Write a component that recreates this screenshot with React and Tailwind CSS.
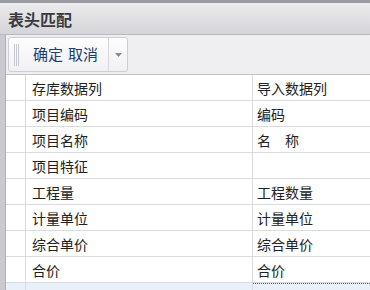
import React from "react";

const rows = [
  ["项目编码", "编码"],
  ["项目名称", "名　称"],
  ["项目特征", ""],
  ["工程量", "工程数量"],
  ["计量单位", "计量单位"],
  ["综合单价", "综合单价"],
  ["合价", "合价"],
];

const font = { fontFamily: '"Noto Sans CJK SC", "Noto Sans", sans-serif' };

const Row = ({ a, b }) => (
  <div className="flex h-[26px] border-b border-[#d9dae2]">
    <div className="w-[20px] shrink-0 border-r border-[#d9dae2]" />
    <div className="w-[227px] shrink-0 border-r border-[#d9dae2] pl-[6px] leading-[26px]">
      {a}
    </div>
    <div className="flex-1 pl-[4px] leading-[26px]">{b}</div>
  </div>
);

const App = () => {
  return (
    <div
      className="w-[370px] h-[290px] overflow-hidden bg-[#efeff1] text-[14px] text-[#222]"
      style={font}
    >
      <div className="h-[3px] bg-[#9b9ba3]" />
      <div className="h-[32px] flex items-center pl-[8px] border-b border-[#b9b9c1] bg-gradient-to-b from-[#ececee] to-[#d5d5d9]">
        <span className="text-[16px] font-bold text-[#3a3a40]">表头匹配</span>
      </div>
      <div className="flex h-[255px]">
        <div className="w-[6px] shrink-0 bg-[#c9c9cf] border-r border-[#b0b0b8]" />
        <div className="flex-1 flex flex-col">
          <div className="h-[40px] shrink-0 pl-[2px] pt-[2px] border-b border-[#c4c4cc]">
            <div className="flex h-[35px] w-[120px] items-center rounded-[3px] border border-[#cdcdd5] bg-gradient-to-b from-[#fdfdfe] to-[#f1f1f4]">
              <div className="ml-[5px] flex gap-[1px] h-[22px]">
                <div className="w-[1px] bg-[#c8c8d0]" />
                <div className="w-[1px] bg-[#c8c8d0]" />
                <div className="w-[1px] bg-[#c8c8d0]" />
              </div>
              <span className="ml-[14px] text-[#233a6e] text-[15px]">确定</span>
              <span className="ml-[5px] text-[#233a6e] text-[15px]">取消</span>
              <div className="ml-auto h-full w-[19px] border-l border-[#d6d6dc] flex items-center justify-center">
                <svg width="7" height="4" viewBox="0 0 7 4">
                  <path d="M0 0h7L3.5 4z" fill="#8a8a92" />
                </svg>
              </div>
            </div>
          </div>
          <div className="flex-1 bg-white">
            <Row a="存库数据列" b="导入数据列" />
            {rows.map(([a, b]) => (
              <Row key={a} a={a} b={b} />
            ))}
            <div className="flex h-[10px] bg-[#eaf0fa]">
              <div className="w-[20px] shrink-0 border-r border-[#d9dae2]" />
              <div className="w-[227px] shrink-0 border-r border-[#d9dae2]" />
              <div className="flex-1 border-t border-dotted border-[#555]" />
            </div>
          </div>
        </div>
      </div>
    </div>
  );
};

export default App;
